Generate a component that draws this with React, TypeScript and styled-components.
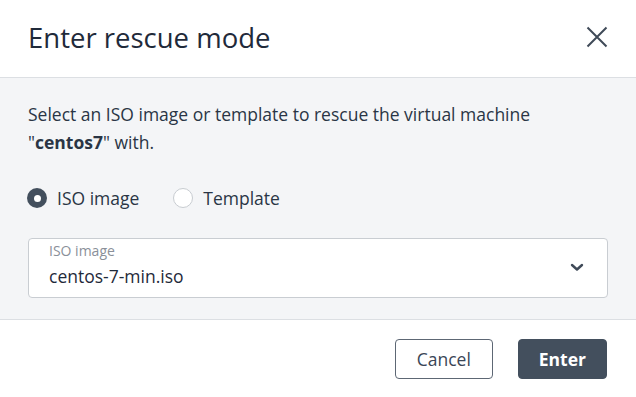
import React, { useState } from "react";
import styled, { createGlobalStyle } from "styled-components";

const Global = createGlobalStyle`
  html, body { margin: 0; padding: 0; background: #ffffff; }
  body { font-family: "Open Sans", "Noto Sans", sans-serif; color: #222d3b; }
  * { box-sizing: border-box; }
`;

const Dialog = styled.div`
  width: 636px;
  height: 397px;
  display: flex;
  flex-direction: column;
  background: #ffffff;
`;

const Header = styled.header`
  height: 78px;
  display: flex;
  align-items: center;
  justify-content: space-between;
  padding: 0 27px 3px 28px;
  border-bottom: 1px solid #dcdfe3;
`;

const Title = styled.h1`
  margin: 0;
  font-size: 27.5px;
  font-weight: 400;
  color: #1f2a3a;
`;

const CloseButton = styled.button`
  border: 0;
  background: transparent;
  padding: 0;
  width: 24px;
  height: 24px;
  display: flex;
  align-items: center;
  justify-content: center;
  color: #3f4a58;
  cursor: pointer;
`;

const Body = styled.section`
  background: #f4f5f7;
  padding: 22px 28px 0 28px;
  display: flex;
  flex-direction: column;
  border-bottom: 1px solid #dcdfe3;
  height: 242px;
`;

const Lead = styled.p`
  margin: 0;
  font-size: 17.5px;
  line-height: 28px;
  color: #2a3545;
`;

const RadioRow = styled.div`
  display: flex;
  gap: 35px;
  margin-top: 30px;
  height: 24px;
`;

const RadioLabel = styled.label`
  display: flex;
  align-items: center;
  gap: 10px;
  font-size: 17.5px;
  line-height: 24px;
  color: #2a3545;
  cursor: pointer;
`;

const RadioDot = styled.span<{ $checked: boolean }>`
  width: 20px;
  height: 20px;
  border-radius: 50%;
  background: ${(p) => (p.$checked ? "#434f5d" : "#ffffff")};
  border: ${(p) => (p.$checked ? "none" : "1px solid #c8ccd1")};
  display: flex;
  align-items: center;
  justify-content: center;
  margin-left: -1px;
  &::after {
    content: "";
    width: 7px;
    height: 7px;
    border-radius: 50%;
    background: #ffffff;
    display: ${(p) => (p.$checked ? "block" : "none")};
  }
`;

const SelectBox = styled.div`
  margin-top: 28px;
  height: 60px;
  background: #ffffff;
  border: 1px solid #c9cdd2;
  border-radius: 4px;
  display: flex;
  align-items: center;
  justify-content: space-between;
  padding: 0 23px 0 20px;
`;

const SelectText = styled.div`
  align-self: flex-start;
  display: flex;
  flex-direction: column;
  padding-top: 4px;
`;

const FieldLabel = styled.span`
  font-size: 14px;
  line-height: 16px;
  color: #8a9099;
`;

const FieldValue = styled.span`
  font-size: 17.5px;
  line-height: 24px;
  color: #1f2a3a;
  margin-top: 5px;
`;

const Chevron = styled.span`
  display: flex;
  color: #3f4a58;
  margin-top: -1px;
`;

const Footer = styled.footer`
  flex: 1;
  display: flex;
  justify-content: flex-end;
  align-items: flex-start;
  gap: 25px;
  padding: 19px 29px 0 0;
`;

const Button = styled.button<{ $primary?: boolean }>`
  height: 40px;
  border-radius: 4px;
  font-family: "Open Sans", "Noto Sans", sans-serif;
  font-size: 17.5px;
  font-weight: ${(p) => (p.$primary ? 700 : 400)};
  padding: 0 ${(p) => (p.$primary ? "20px" : "21px")};
  cursor: pointer;
  background: ${(p) => (p.$primary ? "#434f5d" : "#ffffff")};
  color: ${(p) => (p.$primary ? "#ffffff" : "#3a4656")};
  border: 1px solid ${(p) => (p.$primary ? "#434f5d" : "#5d6774")};
`;

export default function App() {
  const [mode, setMode] = useState<"iso" | "template">("iso");
  return (
    <>
      <Global />
      <Dialog>
        <Header>
          <Title>Enter rescue mode</Title>
          <CloseButton aria-label="Close">
            <svg width="22" height="22" viewBox="0 0 22 22" fill="none">
              <path d="M1.5 1.5 L20.5 20.5 M20.5 1.5 L1.5 20.5" stroke="currentColor" strokeWidth="2" />
            </svg>
          </CloseButton>
        </Header>
        <Body>
          <Lead>
            Select an ISO image or template to rescue the virtual machine
            <br />"<b>centos7</b>" with.
          </Lead>
          <RadioRow>
            <RadioLabel onClick={() => setMode("iso")}>
              <RadioDot $checked={mode === "iso"} />
              ISO image
            </RadioLabel>
            <RadioLabel onClick={() => setMode("template")}>
              <RadioDot $checked={mode === "template"} />
              Template
            </RadioLabel>
          </RadioRow>
          <SelectBox>
            <SelectText>
              <FieldLabel>ISO image</FieldLabel>
              <FieldValue>centos-7-min.iso</FieldValue>
            </SelectText>
            <Chevron>
              <svg width="14" height="9" viewBox="0 0 14 9" fill="none">
                <path d="M2 2 L7 6.5 L12 2" stroke="currentColor" strokeWidth="2.4" strokeLinecap="round" strokeLinejoin="round" />
              </svg>
            </Chevron>
          </SelectBox>
        </Body>
        <Footer>
          <Button>Cancel</Button>
          <Button $primary>Enter</Button>
        </Footer>
      </Dialog>
    </>
  );
}
